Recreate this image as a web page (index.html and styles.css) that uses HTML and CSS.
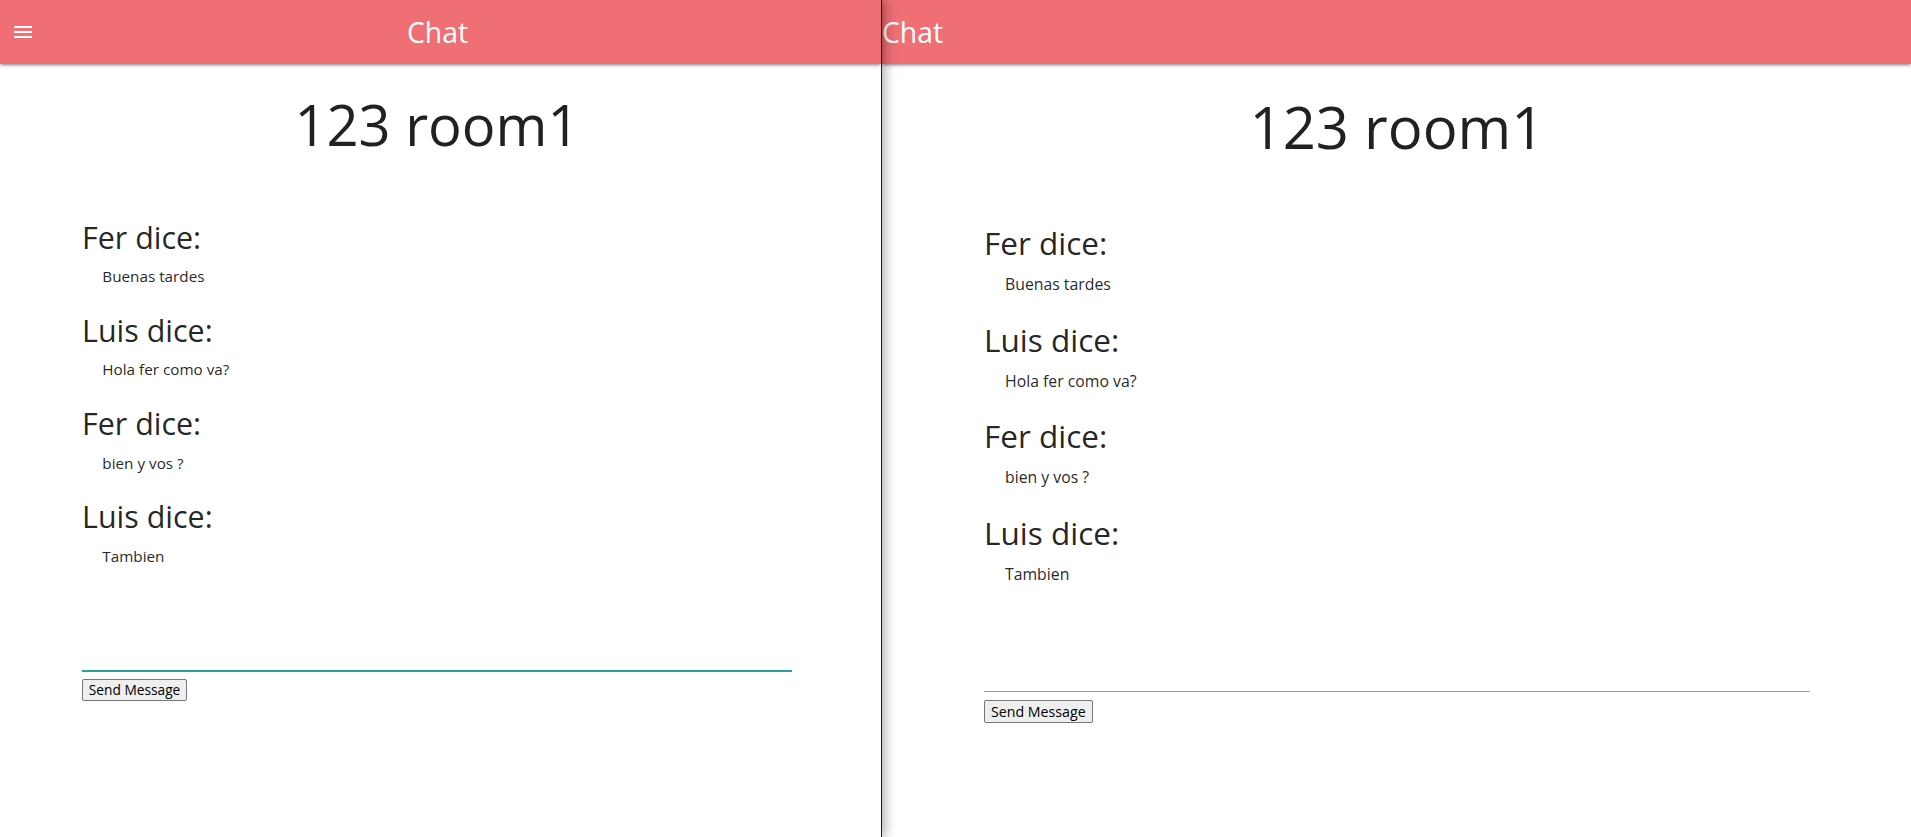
FILE: index.html
```html
<!DOCTYPE html>
<html lang="es">
<head>
<meta charset="utf-8">
<title>Chat</title>
<link rel="stylesheet" href="styles.css">
</head>
<body>
  <section class="pane pane-left">
    <nav class="nav nav-centered">
      <span class="nav-menu" aria-label="menu">
        <svg width="24" height="24" viewBox="0 0 24 24"><path fill="#fff" d="M3 18h18v-2H3v2zm0-5h18v-2H3v2zm0-7v2h18V6H3z"/></svg>
      </span>
      <span class="brand">Chat</span>
      <span></span>
    </nav>
    <main class="content content-left">
      <h1 class="room-title">123 room1</h1>
      <div class="messages">
        <div class="msg"><h4 class="msg-author">Fer dice:</h4><p class="msg-text">Buenas tardes</p></div>
        <div class="msg"><h4 class="msg-author">Luis dice:</h4><p class="msg-text">Hola fer como va?</p></div>
        <div class="msg"><h4 class="msg-author">Fer dice:</h4><p class="msg-text">bien y vos ?</p></div>
        <div class="msg"><h4 class="msg-author">Luis dice:</h4><p class="msg-text">Tambien</p></div>
      </div>
      <form class="send-form">
        <input class="msg-input is-focused" type="text">
        <button class="send-btn" type="button">Send Message</button>
      </form>
    </main>
  </section>
  <section class="pane pane-right">
    <nav class="nav nav-left">
      <span class="brand">Chat</span>
    </nav>
    <main class="content content-right">
      <h1 class="room-title">123 room1</h1>
      <div class="messages">
        <div class="msg"><h4 class="msg-author">Fer dice:</h4><p class="msg-text">Buenas tardes</p></div>
        <div class="msg"><h4 class="msg-author">Luis dice:</h4><p class="msg-text">Hola fer como va?</p></div>
        <div class="msg"><h4 class="msg-author">Fer dice:</h4><p class="msg-text">bien y vos ?</p></div>
        <div class="msg"><h4 class="msg-author">Luis dice:</h4><p class="msg-text">Tambien</p></div>
      </div>
      <form class="send-form">
        <input class="msg-input" type="text">
        <button class="send-btn" type="button">Send Message</button>
      </form>
    </main>
  </section>
</body>
</html>
```
FILE: styles.css
```css
* { box-sizing: border-box; }
html, body { margin: 0; padding: 0; }
body {
  display: flex;
  height: 837px;
  overflow: hidden;
  font-family: "Open Sans", "Noto Sans", sans-serif;
  color: rgba(0, 0, 0, 0.87);
  background: #fff;
}
.pane {
  --u: 1px;
  display: flex;
  flex-direction: column;
  background: #fff;
  min-width: 0;
}
.pane-left {
  --u: 0.9667px;
  width: 882px;
  flex: none;
  border-right: 1px solid #1e1e1e;
  z-index: 2;
  box-shadow: 3px 0 11px rgba(0, 0, 0, 0.32);
}
.pane-right {
  flex: 1;
  z-index: 1;
}
.nav {
  height: 64px;
  flex: none;
  background: #ef6f74;
  color: #fff;
  box-shadow: 0 2px 2px 0 rgba(0,0,0,.14), 0 3px 1px -2px rgba(0,0,0,.12), 0 1px 5px 0 rgba(0,0,0,.2);
}
.nav-centered {
  display: grid;
  grid-template-columns: 1fr auto 1fr;
  align-items: center;
}
.nav-left {
  display: flex;
  align-items: center;
}
.nav-menu {
  display: flex;
  padding-left: 11px;
}
.nav-menu svg { display: block; }
.brand {
  font-size: 28.3px;
  line-height: 64px;
  font-weight: 400;
}
.nav-centered .brand { margin-right: 6px; }
.content-left { padding: 0 89px 0 82px; }
.content-right { padding: 0 101px 0 102px; }
.room-title {
  margin: calc(31 * var(--u)) 0 0;
  font-size: calc(58 * var(--u));
  line-height: calc(64 * var(--u));
  font-weight: 400;
  text-align: center;
}
.messages {
  margin-top: calc(67 * var(--u));
}
.msg-author {
  margin: 0;
  font-size: calc(31.5 * var(--u));
  line-height: calc(34 * var(--u));
  font-weight: 400;
}
.msg-text {
  margin: calc(12 * var(--u)) 0 0;
  padding-left: calc(21 * var(--u));
  font-size: calc(15.8 * var(--u));
  line-height: calc(24 * var(--u));
}
.msg + .msg {
  margin-top: calc(26.5 * var(--u));
}
.send-form {
  margin-top: calc(61.5 * var(--u));
}
.msg-input {
  display: block;
  width: 100%;
  height: calc(45 * var(--u));
  margin: 0 0 calc(8 * var(--u));
  padding: 0;
  border: none;
  border-bottom: 1px solid #9a9a9a;
  background: transparent;
  outline: none;
  font: inherit;
}
.msg-input.is-focused {
  border-bottom-color: #26a69a;
  box-shadow: 0 1px 0 0 #26a69a;
}
.send-btn {
  display: block;
  font-family: "Open Sans", "Noto Sans", sans-serif;
  font-size: calc(14.2 * var(--u));
  line-height: calc(19 * var(--u));
  padding: calc(1 * var(--u)) calc(6 * var(--u));
  border: 1px solid #767676;
  border-radius: 2px;
  background: #efefef;
  color: #000;
}
```
